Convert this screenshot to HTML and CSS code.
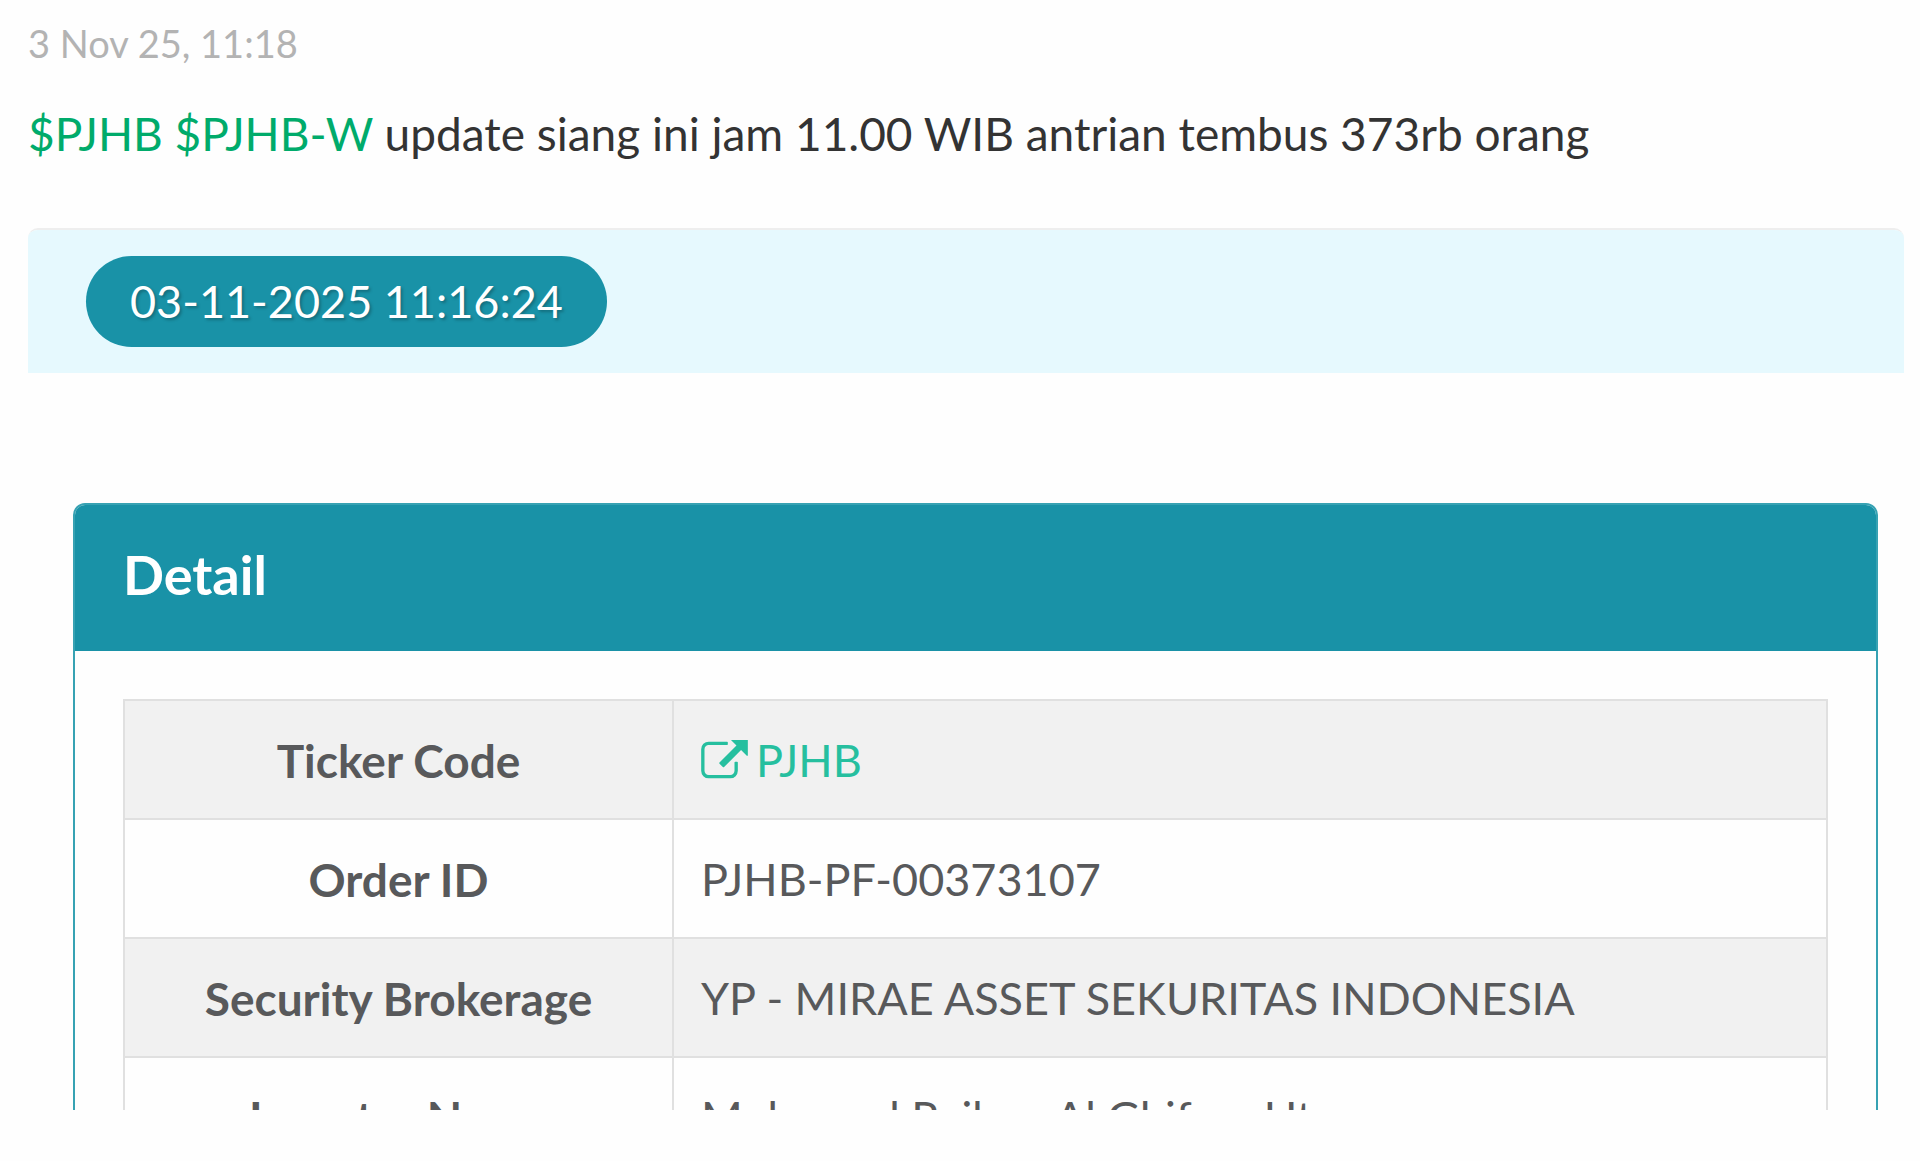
FILE: index.html
```html
<!DOCTYPE html>
<html lang="id">
<head>
<meta charset="utf-8">
<meta name="viewport" content="width=device-width, initial-scale=1">
<title>PJHB</title>
<link rel="stylesheet" href="styles.css">
</head>
<body>
<article class="post">
  <time class="post-time" datetime="2025-11-03T11:18">3 Nov 25, 11:18</time>
  <p class="post-text"><a href="#pjhb">$PJHB</a> <a href="#pjhb-w">$PJHB-W</a> update siang ini jam 11.00 WIB antrian tembus 373rb orang</p>
  <div class="attachment">
    <div class="banner"><span class="stamp">03-11-2025 11:16:24</span></div>
    <section class="card">
      <h2 class="card-title">Detail</h2>
      <div class="card-body">
        <table class="detail">
          <tbody>
            <tr>
              <th scope="row">Ticker Code</th>
              <td><a class="ticker" href="#ticker"><svg class="ticker-icon" viewBox="0 0 1792 1536" aria-hidden="true"><path fill="currentColor" d="M1408 864v320q0 119-84.500 203.500t-203.500 84.500h-832q-119 0-203.500-84.500t-84.500-203.500v-832q0-119 84.500-203.500t203.500-84.500h704q14 0 23 9t9 23v64q0 14-9 23t-23 9h-704q-66 0-113 47t-47 113v832q0 66 47 113t113 47h832q66 0 113-47t47-113v-320q0-14 9-23t23-9h64q14 0 23 9t9 23zM1792 0v608h-40l-220-220-652 652q-10 10-23 10t-23-10l-130-130q-10-10-10-23t10-23l652-652-204-204v-8z"/></svg>PJHB</a></td>
            </tr>
            <tr><th scope="row">Order ID</th><td>PJHB-PF-00373107</td></tr>
            <tr><th scope="row">Security Brokerage</th><td>YP - MIRAE ASSET SEKURITAS INDONESIA</td></tr>
            <tr><th scope="row">Investor Name</th><td>Mohamad Raihan Al Ghifary Utama</td></tr>
          </tbody>
        </table>
      </div>
    </section>
  </div>
</article>
</body>
</html>
```
FILE: styles.css
```css
* {
  box-sizing: border-box;
}

body {
  margin: 0;
  background: #fefefe;
  color: #333;
  font-family: Lato, "Liberation Sans", sans-serif;
}

a {
  color: inherit;
  text-decoration: none;
}

.post {
  padding: 19px 16px 50px 28px;
}

.post-time {
  display: block;
  color: #b3b3b3;
  font-size: 38px;
  line-height: 48px;
}

.post-text {
  margin: 35px 0 62px;
  font-size: 46px;
  line-height: 64px;
}

.post-text a {
  color: #00ab6b;
}

.attachment {
  max-height: 882px;
  overflow: hidden;
  border-top: 2px solid #eee;
  border-radius: 10px 10px 0 0;
}

.banner {
  display: flex;
  padding: 26px 58px;
  background: #e6f9fe;
}

.stamp {
  padding: 0 44px;
  border-radius: 46px;
  background: #1992a7;
  color: #fff;
  font-size: 45px;
  line-height: 91px;
  text-shadow: 2px 2px 3px rgb(0 0 0 / 25%);
}

.card {
  margin: 130px 26px 0 45px;
  border: 2px solid #37a2b3;
  border-radius: 12px;
  overflow: hidden;
}

.card-title {
  margin: 0;
  padding: 0 48px 6px;
  background: #1992a7;
  color: #fff;
  font-size: 54px;
  font-weight: 700;
  line-height: 140px;
}

.card-body {
  padding: 48px;
}

.detail {
  width: 100%;
  border-collapse: collapse;
  table-layout: fixed;
  color: #58595b;
  font-size: 45px;
  line-height: 60px;
}

.detail th,
.detail td {
  height: 119px;
  padding: 0 27px;
  border: 2px solid #e0e0e0;
}

.detail th {
  width: 549px;
  padding-top: 2px;
  font-size: 46px;
  font-weight: 700;
}

.detail td {
  text-align: left;
}

.detail tr:nth-child(odd) {
  background: #f1f1f1;
}

.ticker {
  display: flex;
  align-items: center;
  gap: 8px;
  color: #26bf9f;
}

.ticker-icon {
  width: 47px;
  height: 40px;
}
```
